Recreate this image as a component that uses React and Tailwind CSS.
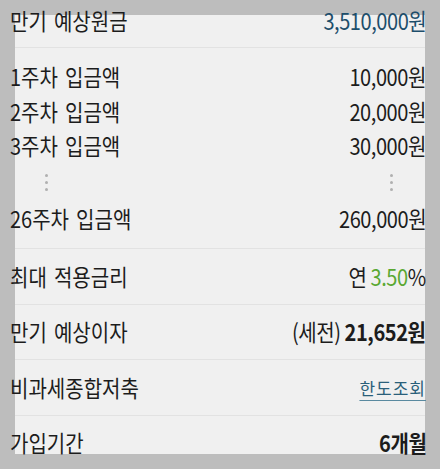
import React from "react";

const font = { fontFamily: '"Noto Sans CJK KR", "Noto Sans", sans-serif' };

function Row({ h, label, children, className = "" }) {
  return (
    <div className={`flex items-center justify-between pl-[10px] pr-[14px] ${h} ${className}`}>
      <span className="inline-block origin-left scale-x-[0.87] whitespace-nowrap text-[23px] leading-none text-[#1c1c1c] [word-spacing:3px]">
        {label}
      </span>
      <span className="inline-block origin-right scale-x-[0.87] whitespace-nowrap text-[23px] leading-none tracking-[-0.5px] text-[#1c1c1c]">
        {children}
      </span>
    </div>
  );
}

function Divider() {
  return <div className="mx-[15px] h-px bg-[#e2e2e2]" />;
}

function Dots() {
  return (
    <div className="flex flex-col gap-[4px]">
      <div className="h-[3px] w-[3px] rounded-full bg-[#b0b0b0]" />
      <div className="h-[3px] w-[3px] rounded-full bg-[#b0b0b0]" />
      <div className="h-[3px] w-[3px] rounded-full bg-[#b0b0b0]" />
    </div>
  );
}

export default function App() {
  return (
    <div
      style={font}
      className="flex h-[469px] w-[440px] flex-col overflow-hidden bg-[#f0f0f0] shadow-[inset_0_0_0_15px_#bdbdbd]"
    >
      <Row h="h-[42px]" label="만기 예상원금">
        <span className="text-[#1d4e6b]">3,510,000원</span>
      </Row>
      <div className="h-[5px]" />
      <Divider />
      <div className="h-[12px]" />
      <Row h="h-[35px]" label="1주차 입금액">10,000원</Row>
      <Row h="h-[35px]" label="2주차 입금액">20,000원</Row>
      <Row h="h-[35px]" label="3주차 입금액">30,000원</Row>
      <div className="flex h-[38px] items-center justify-between pl-[45px] pr-[47px]">
        <Dots />
        <Dots />
      </div>
      <Row h="h-[35px]" label="26주차 입금액">260,000원</Row>
      <div className="h-[13px]" />
      <Divider />
      <Row h="h-[55px]" label="최대 적용금리">
        연 <span className="text-[#5aa832]">3.50</span>%
      </Row>
      <Divider />
      <Row h="h-[55px]" label="만기 예상이자">
        (세전) <span className="font-semibold">21,652원</span>
      </Row>
      <Divider />
      <div className="flex h-[55px] items-center justify-between pl-[10px] pr-[14px]">
        <span className="inline-block origin-left scale-x-[0.87] whitespace-nowrap text-[23px] leading-none text-[#1c1c1c]">
          비과세종합저축
        </span>
        <span className="whitespace-nowrap text-[17px] leading-none tracking-[1px] text-[#2a5f7a] underline decoration-[#5a8aa0] decoration-1 underline-offset-[5px]">
          한도조회
        </span>
      </div>
      <Divider />
      <Row h="h-[54px]" label="가입기간">
        <span className="font-bold">6개월</span>
      </Row>
    </div>
  );
}
